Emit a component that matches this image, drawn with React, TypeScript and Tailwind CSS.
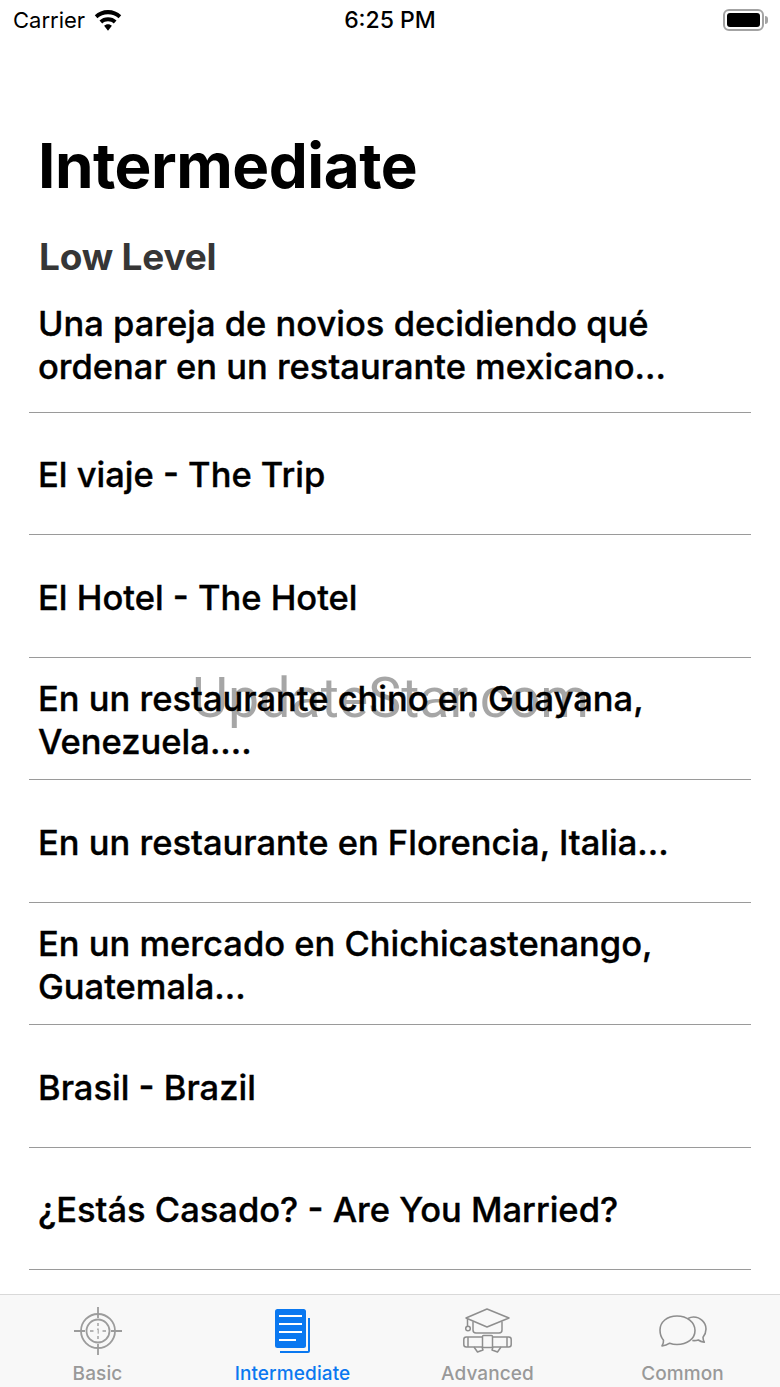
const FONT = "font-['Inter','Liberation_Sans',sans-serif]";

const ROWS = [
  { title: "Una pareja de novios decidiendo qué ordenar en un restaurante mexicano..." },
  { title: "El viaje - The Trip" },
  { title: "El Hotel - The Hotel" },
  { title: "En un restaurante chino en Guayana, Venezuela...." },
  { title: "En un restaurante en Florencia, Italia..." },
  { title: "En un mercado en Chichicastenango, Guatemala..." },
  { title: "Brasil - Brazil" },
  { title: "¿Estás Casado? - Are You Married?" },
];

function WifiIcon() {
  return (
    <svg width="28" height="21" viewBox="0 0 28 21" fill="#000">
      <path d="M14 0C8.8 0 4.3 2 .8 5.3l2.600 3C6.200 5.700 9.900 4.200 14 4.200s7.800 1.500 10.600 4.100l2.600-3C23.700 2 19.200 0 14 0z" />
      <path d="M14 7.200c-3.300 0-6.300 1.200-8.500 3.300l2.700 3c1.500-1.400 3.500-2.200 5.800-2.200s4.300.8 5.800 2.200l2.700-3c-2.200-2.100-5.200-3.300-8.500-3.300z" />
      <path d="M14 14.300c-1.500 0-2.900.6-3.900 1.500L14 20.700l3.900-4.900c-1-.9-2.400-1.500-3.900-1.500z" />
    </svg>
  );
}

function BatteryIcon() {
  return (
    <div className="flex items-center gap-[1px]">
      <div className="w-[41px] h-[22px] rounded-[6px] border-2 border-[#a3a3a3] p-[2px]">
        <div className="w-full h-full rounded-[3px] bg-black" />
      </div>
      <div className="w-[3px] h-[8px] rounded-r-sm bg-[#a3a3a3]" />
    </div>
  );
}

function BasicIcon() {
  return (
    <svg width="48" height="48" viewBox="0 0 48 48" fill="none" stroke="#9c9c9c" strokeWidth="1.800">
      <circle cx="24" cy="24" r="17" />
      <circle cx="24" cy="24" r="11.500" />
      <path d="M24 0v11M24 37v11M0 24h11M37 24h11" />
      <path d="M16 24h3.500M28.500 24h3.500M24 16v3M24 29v3" strokeWidth="1.400" />
      <path d="M23 22.500l1.200-.8v5" strokeWidth="1" />
    </svg>
  );
}

function IntermediateIcon() {
  return (
    <svg width="35" height="44" viewBox="0 0 35 44">
      <path d="M33 9h2v33a2 2 0 0 1-2 2H5v-2h28z" fill="#0a78f0" />
      <rect x="0" y="0" width="31" height="39" rx="2.500" fill="#0a78f0" />
      <path d="M4 7h23M4 15h23M4 23h23M4 31h17" stroke="#fff" strokeWidth="2" />
    </svg>
  );
}

function AdvancedIcon() {
  return (
    <svg width="49" height="45" viewBox="0 0 49 45" fill="none" stroke="#8e8e8e" strokeWidth="1.500" strokeLinejoin="round">
      <path d="M24 1 46 10 24 19 3 10z" />
      <path d="M10 13.500v8.500c0 2 1 3 3 3h23c2 0 3-1 3-3v-8.500" />
      <path d="M4.500 10.500v7.500" />
      <circle cx="5" cy="20.500" r="2.300" />
      <rect x=".8" y="29" width="47.400" height="10" rx="2.500" />
      <path d="M5 29v10M44 29v10" />
      <rect x="19.500" y="27.500" width="10" height="12" rx="1" fill="#f8f8f8" />
      <path d="M11 39 14.500 44l5.500-2-1-3M38 39 34.500 44l-5.500-2 1-3" />
    </svg>
  );
}

function CommonIcon() {
  return (
    <svg width="48" height="32" viewBox="0 0 48 32" fill="none" stroke="#8e8e8e" strokeWidth="1.600" strokeLinejoin="round">
      <path d="M3 31c1.200-2.200 1.700-4 1.500-5.800C2.300 22.700 1 19 1 15 1 7 8 1 18 1s18 6 18 14.500S28 29.500 18 29.500c-2.700 0-5-.4-7.300-1.300C8.500 29.700 6 30.700 3 31z" />
      <path d="M29 3.500c1.500-.8 3.200-1.500 5.500-1.500C41.500 2 47 7.700 47 14c0 3.300-1.200 6-3 8.200 0 1.600.3 3.200 1.300 5-2.300-.4-4.300-1-6-2.200-1.700.5-3.500.8-6 .5" />
    </svg>
  );
}

const TABS = [
  { label: "Basic", icon: <BasicIcon />, active: false },
  { label: "Intermediate", icon: <IntermediateIcon />, active: true },
  { label: "Advanced", icon: <AdvancedIcon />, active: false },
  { label: "Common", icon: <CommonIcon />, active: false },
];

export default function App() {
  return (
    <div className={`relative w-[780px] h-[1387px] overflow-hidden bg-white text-black flex flex-col ${FONT}`}>
      {/* Status bar */}
      <div className="h-10 shrink-0 grid grid-cols-3 items-center pl-[13px] pr-[12px]">
        <div className="flex items-center gap-[9px] text-[22px]">
          <span className="font-normal">Carrier</span>
          <WifiIcon />
        </div>
        <div className="text-center font-medium text-[23px] pr-[1px]">6:25 PM</div>
        <div className="flex justify-end">
          <BatteryIcon />
        </div>
      </div>

      {/* Heading */}
      <div className="flex-1 min-h-0 flex flex-col">
        <h1 className="mt-[88px] ml-[38px] text-[62px] leading-[76px] font-bold tracking-[-0.5px]">Intermediate</h1>
        <h2 className="mt-[31px] ml-[39px] text-[37px] leading-[44px] font-bold text-[#363636] tracking-[-0.2px]">Low Level</h2>

        {/* List */}
        <div className="mx-[29px]">
          {ROWS.map((row, index) => (
            <div
              key={row.title}
              className={`flex items-center pl-[9px] pr-[70px] border-b border-[#9a9a9a] text-[34.500px] leading-[43px] font-medium [-webkit-text-stroke:0.35px_black] ${
                index === 0 ? "h-[133.500px]" : "h-[122.500px] pt-[3px]"
              }`}
            >
              <span>{row.title}</span>
            </div>
          ))}
        </div>
      </div>

      {/* Tab bar */}
      <div className="h-[93px] shrink-0 grid grid-cols-4 border-t border-[#d9d9d9] bg-[#f8f8f8]">
        {TABS.map((tab) => (
          <div key={tab.label} className="flex flex-col items-center">
            <div className="h-[68px] flex items-center justify-center pt-[3px]">{tab.icon}</div>
            <span className={`text-[19px] leading-[22px] font-medium tracking-[0.1px] ${tab.active ? "text-[#0a78f0]" : "text-[#999]"}`}>
              {tab.label}
            </span>
          </div>
        ))}
      </div>

      {/* Watermark */}
      <div className="absolute left-[192px] top-[663px] font-['Roboto',sans-serif] font-normal text-[55.500px] leading-[72px] text-black/35 whitespace-nowrap">
        UpdateStar.com
      </div>
    </div>
  );
}
